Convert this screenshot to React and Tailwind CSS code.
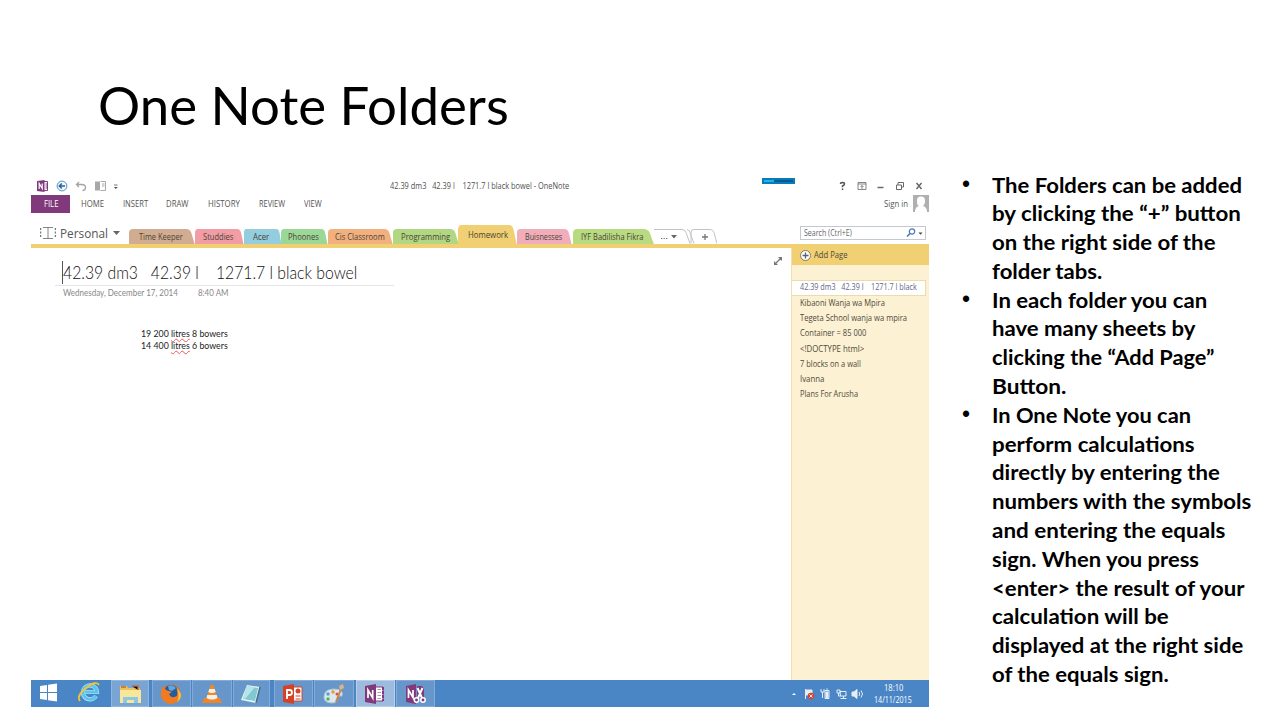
import { useLayoutEffect, useRef, useState } from "react";

// Sets a single line of text to an exact width by condensing or widening it.
function Line({ w, className = "", children }) {
  const ref = useRef(null);
  const [scale, setScale] = useState(1);
  useLayoutEffect(() => {
    setScale(w / ref.current.offsetWidth);
  }, [w]);
  return (
    <span className={`block shrink-0 ${className}`} style={{ width: w }}>
      <span ref={ref} className="block w-max origin-left whitespace-pre" style={{ transform: `scaleX(${scale})` }}>
        {children}
      </span>
    </span>
  );
}

const bullets = [
  [["The Folders can be added", 250], ["by clicking the “+” button", 249], ["on the right side of the", 224], ["folder tabs.", 110]],
  [["In each folder you can", 215], ["have many sheets by", 203], ["clicking the “Add Page”", 223], ["Button.", 74]],
  [
    ["In One Note you can", 199], ["perform calculations", 203], ["directly by entering the", 228], ["numbers with the symbols", 259],
    ["and entering the equals", 233], ["sign. When you press", 207], ["<enter> the result of your", 252], ["calculation will be", 177],
    ["displayed at the right side", 251], ["of the equals sign.", 177],
  ],
];

const pages = [
  ["Kibaoni Wanja wa Mpira", 85], ["Tegeta School wanja wa mpira", 107], ["Container = 85 000", 66], ["<!DOCTYPE html>", 64],
  ["7 blocks on a wall", 61], ["Ivanna", 24], ["Plans For Arusha", 58],
];

function Tab({ text, w, fill, box, pad, tall }) {
  return (
    <div className={`relative flex shrink-0 items-center ${box} ${pad} ${tall ? "h-[19px]" : "h-[15px]"}`}>
      <svg className="absolute inset-0 h-full w-full overflow-visible" viewBox="0 0 100 15" preserveAspectRatio="none">
        <path d="M0 15V4Q0 0 6 0H88Q94 0 96 4L101 15Z" className={fill} />
      </svg>
      <Line w={w} className="relative text-[8.800px] leading-[14px] text-[#4b4437]">{text}</Line>
    </div>
  );
}

function Ribbon() {
  return (
    <>
      <div className="flex h-[17px] items-center pb-0.5">
        <svg className="ml-1.5 h-3 w-[90px]" viewBox="0 0 90 12">
          <path d="M0 1 7.500 0v12L0 11Z" fill="#80397b" />
          <path d="M2.200 9V3.500l3 5v-5" fill="none" stroke="#fff" strokeWidth="1.200" />
          <path d="M7 1.500h3.500v9H7M8.500 4h2M8.500 6h2M8.500 8h2" fill="none" stroke="#80397b" />
          <circle cx="25" cy="6" r="4.900" fill="#eef7fc" stroke="#5691bd" />
          <path d="M28 6h-5.500m2.300-2.500L22.300 6l2.500 2.500" fill="none" stroke="#24649b" strokeWidth="1.500" />
          <path d="M42 2 39.500 4.500 42 7M40 4.500h4.500q4 0 4 3t-3 3" fill="none" stroke="#a4a4a4" strokeWidth="1.300" />
          <path d="M58 1.500h5v9h-5Z" fill="#a8a8a8" />
          <path d="M63.500 1.500h5v9h-5M65 4h2.500M65 6h2.500" fill="none" stroke="#aaa" />
          <path d="M77 5h3.500" stroke="#777" />
          <path d="M76.800 7h4l-2 2Z" fill="#555" />
        </svg>
        <Line w={179} className="ml-[263px] pt-px text-[8.800px] leading-3 text-[#505050]">{"42.39 dm3   42.39 l    1271.7 l black bowel - OneNote"}</Line>
        <div className="mb-[9px] ml-[193px] flex h-1.5 w-[33px] items-center bg-[#087bbb] px-0.5">
          <div className="h-0.5 w-2.5 bg-[#27b1e5]" />
          <div className="h-0.5 flex-1 bg-[#075b8d]" />
        </div>
        <svg className="ml-[43px] h-3 w-[88px]" viewBox="0 0 88 12" fill="none" stroke="#686868">
          <path d="M2.500 4Q2.500 2.500 4.500 2.500T6.500 4Q6.500 5 4.500 6v1.300M4.500 8.500V10" stroke="#555" strokeWidth="1.500" />
          <path d="M20 2.500h8v7h-8ZM20 4h8M24 9V5.500M22.500 7 24 5.500 25.500 7" strokeWidth=".8" />
          <path d="M39.500 7.500h6" strokeWidth="1.500" />
          <path d="M58.500 5h5v4.500h-5ZM60 5V2.500h5.500V7h-2" />
          <path d="m78.500 3 5 6m0-6-5 6" strokeWidth="1.500" />
        </svg>
      </div>
      <div className="flex h-[18px] items-center text-[8.800px] leading-3 text-[#555]">
        <div className="flex h-[18px] w-[39px] items-center justify-center bg-[#80397b] text-white"><Line w={14}>FILE</Line></div>
        <Line w={23} className="ml-[11px]">HOME</Line>
        <Line w={25} className="ml-[19px]">INSERT</Line>
        <Line w={23} className="ml-[18px]">DRAW</Line>
        <Line w={32} className="ml-[19px]">HISTORY</Line>
        <Line w={26} className="ml-[19px]">REVIEW</Line>
        <Line w={18} className="ml-[19px]">VIEW</Line>
        <Line w={24} className="ml-[562px]">Sign in</Line>
        <svg className="-mt-px ml-[5px] h-[17px] w-4" viewBox="0 0 16 17">
          <path d="M0 0h16v17H0Z" fill="#b0b0b0" />
          <path d="M4 5.500a4 4 0 0 1 8 0v2q-1 3-2 3.500 4 1 4 6H2q0-5 4-6-2-1-2-3.500Z" fill="#fff" />
        </svg>
      </div>
      <div className="flex h-[31px] items-end">
        <div className="flex h-5 w-[98px] items-center pl-[9px]">
          <svg className="mb-[3px] h-3 w-4" viewBox="0 0 16 12" fill="none" stroke="#777" strokeWidth=".9">
            <path d="M8 1v10.500M3 .5h10M3 11.500h10" />
            <path d="M.5 1v10.500M15.500 1v10.500" strokeWidth="1.500" strokeDasharray="2 1.500" />
          </svg>
          <Line w={48} className="mb-[3px] ml-[4px] text-[13.500px] leading-5 text-[#555]">Personal</Line>
          <svg className="mb-[2px] ml-[5px] h-1.5 w-[7px] shrink-0" viewBox="0 0 7 6"><path d="M0 1h7L3.500 5Z" fill="#666" /></svg>
        </div>
        <Tab text="Time Keeper" w={44} box="w-[65px]" pad="pl-2.5" fill="fill-[#d2ac91]" />
        <Tab text="Studdies" w={30} box="ml-px w-12" pad="pl-2" fill="fill-[#f29da5]" />
        <Tab text="Acer" w={16} box="ml-px w-[37px]" pad="pl-[9px]" fill="fill-[#94cddd]" />
        <Tab text="Phoones" w={31} box="w-[46px]" pad="pl-[7px]" fill="fill-[#9bd797]" />
        <Tab text="Cis Classroom" w={50} box="ml-px w-16" pad="pl-[7px]" fill="fill-[#f2b07f]" />
        <Tab text="Programming" w={49} box="ml-px w-[65px]" pad="pl-2" fill="fill-[#b1d782]" />
        <Tab text="Homework" w={40} box="w-[58px]" pad="pl-2.5" fill="fill-[#f0d073]" tall />
        <Tab text="Buisnesses" w={37} box="ml-px w-[54px]" pad="pl-2" fill="fill-[#f2adba]" />
        <Tab text="IYF Badilisha Fikra" w={62} box="ml-0.5 w-[80px]" pad="pl-2" fill="fill-[#b8da80]" />
        <svg className="h-[15px] w-16" viewBox="0 0 64 15" fill="none" stroke="#c2c2c2">
          <path d="M1 .5h28q3 0 4 3l4 11M34 .5q2 0 3 3l4 11M38 14.500V3q0-2.500 3-2.500h16q3 0 4 3l3 11" />
          <path d="M8 9.500h1.300M10.500 9.500h1.300M13 9.500h1.300" stroke="#777" />
          <path d="M18 6h6l-3 3.500Z" fill="#666" stroke="none" />
          <path d="M49 8h6M52 5v6" stroke="#777" strokeWidth="1.300" />
        </svg>
        <div className="mb-1 ml-[83px] flex h-3.5 w-[126px] items-center border border-[#c4c9d0] pl-[3px]">
          <Line w={48} className="text-[8.800px] leading-3 text-[#666]">Search (Ctrl+E)</Line>
          <svg className="ml-[54px] h-3 w-[18px]" viewBox="0 0 18 12">
            <circle cx="6" cy="4.500" r="2.700" fill="none" stroke="#4779b9" strokeWidth="1.200" />
            <path d="m4 6.500-3 3" stroke="#4779b9" strokeWidth="1.600" /><path d="M12.500 5.500h4l-2 2.300Z" fill="#444" />
          </svg>
        </div>
      </div>
      <div className="h-1 bg-[#f0d073]" />
    </>
  );
}

function Notebook() {
  return (
    <div className="flex h-[432px]">
      <div className="w-[760px] font-['Lato',sans-serif]">
        <div className="ml-6 flex h-[38px] w-[339px] items-end border-b border-[#e5e5e5] pl-[7px]">
          <div className="mb-px h-[23px] w-px shrink-0 bg-[#555]" />
          <Line w={294} className="mb-px text-[18px] font-light leading-6 text-[#111]">{"42.39 dm3   42.39 l    1271.7 l black bowel"}</Line>
          <svg className="mb-5 ml-[417px] h-2 w-2 shrink-0" viewBox="0 0 8 8" fill="none" stroke="#777" strokeWidth="1.300"><path d="M.5 7.500 7.500.5M4.500.5h3v3M.5 4.500v3h3" /></svg>
        </div>
        <div className="flex pl-[32px] pt-[1.500px] text-[8.500px] leading-[11px] text-[#888]">
          <Line w={115}>Wednesday, December 17, 2014</Line>
          <Line w={30} className="ml-5">8:40 AM</Line>
        </div>
        <div className="pl-[110px] pt-[29px] text-[9.300px] leading-[12.500px] text-[#222]">
          <Line w={87}>19 200 <span className="underline decoration-[#e55] decoration-wavy decoration-[0.5px] underline-offset-1">litres</span> 8 bowers</Line>
          <Line w={87}>14 400 <span className="underline decoration-[#e55] decoration-wavy decoration-[0.5px] underline-offset-1">litres</span> 6 bowers</Line>
        </div>
      </div>
      <div className="w-[138px] border-l border-[#f1dfac] bg-[#fcf1d2] text-[8.800px] text-[#4e493d]">
        <div className="flex h-[17px] items-center bg-[#f0d073] pb-1 pl-2">
          <svg className="mt-0.5 h-3 w-3" viewBox="0 0 12 12"><circle cx="5.500" cy="5.500" r="5" fill="#fff" stroke="#887a55" /><path d="M2.500 5.500h6M5.500 2.500v6" stroke="#596077" strokeWidth="1.300" /></svg>
          <Line w={34} className="ml-[2px] leading-3">Add Page</Line>
        </div>
        <div className="mt-[15px] flex h-4 w-[134px] items-center border border-l-0 border-[#eddcab] bg-white pl-2 text-[#65658a]"><Line w={117}>{"42.39 dm3   42.39 l    1271.7 l black"}</Line></div>
        <div className="pl-2">
          {pages.map(([t, w]) => <Line key={t} w={w} className="h-[15.200px] leading-[14.500px]">{t}</Line>)}
        </div>
      </div>
    </div>
  );
}

function AppIcon({ kind }) {
  return (
    <svg className="h-[22px] w-6" viewBox="0 0 24 22">
      {kind === "win" && <path d="m3 4 7-1v7H3Zm8-1.200L20 1.500V10h-9ZM3 11h7v7l-7-1Zm8 0h9v8.500L11 18.200Z" fill="#fff" />}
      {kind === "ie" && <g fill="none"><path d="M19 14a7 7 0 1 1 1-4H8" stroke="#b3e7fa" strokeWidth="4.200" /><path d="M19 14a7 7 0 1 1 1-4H8" stroke="#5bc3ed" strokeWidth="2.800" /><path d="M3 19Q-1 14 9 6T22 3" stroke="#edc536" strokeWidth="1.800" /></g>}
      {kind === "files" && <g><path d="M2 3h7l1 2h12v15H2Z" fill="#e7c35e" /><path d="M3 4h5M14 3h6v4" stroke="#bd6d3b" strokeWidth="1.500" /><path d="M2 7h21v13H2Z" fill="#f8e69b" /><path d="M5 20v-6h15v6h-4v-3H9v3Z" fill="#8ac9e5" /></g>}
      {kind === "fox" && <g><circle cx="12" cy="11" r="9.500" fill="#e66e22" /><circle cx="12" cy="9" r="7" fill="#225ba0" /><path d="M9 3q5-2 8 2l-4 3-3-1Z" fill="#62a8d7" /><path d="M2 8 4 3l3 4 6 2-3 2q2 5 8 2 1-5-1-8 9 8 1 14-9 5-14-2-3-3-2-7" fill="#ef7b24" /><path d="M18 5q8 8 0 14 3-6 0-14" fill="#fbbf38" /></g>}
      {kind === "vlc" && <g><path d="M4 15h16l2 5H2Z" fill="#ed842a" /><path d="M10.500 2h3l4.500 15q-6 3-12 0Z" fill="#f18925" /><path d="m9.300 6-1 3q3.700 2 7.400 0l-1-3Zm-2 6-.8 3q5.500 3 11 0l-.8-3Z" fill="#f4f1eb" /></g>}
      {kind === "note" && <g><path d="M8 2 21 4l-4 16-15-3Z" fill="#e8f6f7" /><path d="m8 3 11 2-3 13-12-2Z" fill="#82c8d2" /><path d="m8 3 8 1L6 16l-2-1Z" fill="#b7e4e8" /><path d="m21 4-4 16" stroke="#466f8b" strokeWidth="1.500" /></g>}
      {kind === "ppt" && <g><path d="M12 4h9v14h-9Z" fill="#fff" stroke="#d54427" /><path d="M2 3 13 1v20L2 19Z" fill="#d34224" /><path d="M6 16V7h2.500a2.500 2.500 0 0 1 0 5H6" fill="none" stroke="#fff" strokeWidth="1.800" /><circle cx="17" cy="8" r="2.500" fill="#d54427" /><path d="M14.500 13h5m-5 3h5" stroke="#d54427" /></g>}
      {kind === "paint" && <g><path d="M2 14Q2 6 12 6t8 7q-4-1-5 2 1 5-5 5-8 0-8-6" fill="#dce8ef" stroke="#abc1d0" /><circle cx="6" cy="11" r="1.800" fill="#4da5d8" /><circle cx="11" cy="9" r="1.800" fill="#ef9d27" /><circle cx="6" cy="16" r="1.800" fill="#62b450" /><circle cx="15" cy="11" r="1.500" fill="#d85242" /><path d="m14 19 5-13" stroke="#ca8545" strokeWidth="2" /><path d="m18 7-1-4 4-2 1 4Z" fill="#d6b68b" /></g>}
      {kind === "one" && <g><path d="M12 4h8v14h-8Z" fill="#fff" stroke="#80397b" /><path d="M14.500 6.500h3.500m-3.500 3h3.500m-3.500 3h3.500m-3.500 3h3.500" stroke="#b98fb6" /><path d="M20 4v14" stroke="#80397b" strokeWidth="2" strokeDasharray="3 1" /><path d="M2 3 13 1v20L2 19Z" fill="#80397b" /><path d="M5 15V7l4.700 8V7" fill="none" stroke="#fff" strokeWidth="1.700" /></g>}
      {kind === "snip" && <g><path d="M3 3 13 1v20L3 19Z" fill="#80397b" /><path d="M5.500 15V7l4.500 7.500V7" fill="none" stroke="#fff" strokeWidth="1.700" /><path d="M14 3h5l2 3v9h-7" fill="#80397b" /><path d="m14.500 5 4.500 10m.5-10L15 15" stroke="#fff" strokeWidth="2" /><circle cx="13.500" cy="17" r="2.200" fill="#80397b" stroke="#fff" strokeWidth="1.500" /><circle cx="20" cy="17" r="2.200" fill="#80397b" stroke="#fff" strokeWidth="1.500" /></g>}
    </svg>
  );
}

const taskButtons = [
  ["files", "w-[38px] border-[#92b6df] bg-[#7aa5d2]"], ["fox", "ml-[3px] w-[39px] border-[#84abd8] bg-[#6796ca]"], ["vlc", "ml-px w-10 border-[#84abd8] bg-[#6796ca]"],
  ["note", "ml-px w-[37px] border-[#84abd8] bg-[#6796ca]"], ["ppt", "ml-1 w-[39px] border-[#84abd8] bg-[#6796ca]"], ["paint", "ml-px w-10 border-[#84abd8] bg-[#6796ca]"],
  ["one", "ml-0.5 w-[39px] border-[#b9d0ea] bg-[#9dbbdf]"], ["snip", "ml-px w-[39px] border-[#84abd8] bg-[#6796ca]"],
];

function Taskbar() {
  return (
    <div className="flex h-[27px] items-center bg-[#4a86c5]">
      <div className="ml-[6px] w-6 pb-px"><AppIcon kind="win" /></div>
      <div className="ml-4 w-[34px] pb-px"><AppIcon kind="ie" /></div>
      {taskButtons.map(([kind, cls]) => (
        <div key={kind} className={`flex h-[27px] shrink-0 items-center justify-center border pr-px ${cls}`}><AppIcon kind={kind} /></div>
      ))}
      <svg className="ml-[356px] h-[14px] w-[74px] shrink-0" viewBox="0 0 74 14" fill="none" stroke="#e5edf5">
        <path d="M1 8h4L3 6Z" fill="#fff" stroke="none" />
        <path d="M14.500 2v10M15 3h6v5h-6" fill="#e5edf5" /><circle cx="20" cy="9" r="3.300" fill="#d64133" stroke="none" /><path d="m18.500 7.500 3 3m0-3-3 3" />
        <path d="M34 3.500h4v8h-4ZM35.300 2h1.500" /><path d="M35 5h2v5.500h-2Z" fill="#e5edf5" /><path d="M30 2v3h3V2m-1.500 3v6" />
        <path d="M46 3h3v3h-3ZM49 4.500h6V9h-5.500ZM52.500 9v2m-3 .5h6" /><path d="M47.500 6v3H50" />
        <path d="M61 5h2l3-2.500v9L63 9h-2Z" fill="#e5edf5" /><path d="M68 5q1.500 2 0 4m2-5.500q3 3.500 0 7" />
      </svg>
      <div className="ml-[9px] flex flex-col items-center text-[8.800px] leading-3 text-white">
        <Line w={19}>18:10</Line>
        <Line w={38}>14/11/2015</Line>
      </div>
    </div>
  );
}

export default function App() {
  return (
    <main className="h-[720px] w-[1280px] overflow-hidden bg-white font-['Lato',sans-serif] text-black">
      <h1 className="flex h-[178px] pl-[98px] pt-[75px] text-[52.500px] leading-[60px]"><Line w={411}>One Note Folders</Line></h1>
      <div className="flex">
        <section className="ml-[31px] w-[898px] shrink-0 font-['Open_Sans',sans-serif]">
          <Ribbon />
          <Notebook />
          <Taskbar />
        </section>
        <ul className="-mt-[7.500px] ml-[33px] text-[20.500px] font-bold leading-[28.800px]">
          {bullets.map((lines, i) => (
            <li key={i} className="flex">
              <span className="w-[29.500px] shrink-0 font-['Liberation_Sans',sans-serif] text-[23px] font-normal leading-[27px]">•</span>
              <div>{lines.map(([t, w]) => <Line key={t} w={w}>{t}</Line>)}</div>
            </li>
          ))}
        </ul>
      </div>
    </main>
  );
}
